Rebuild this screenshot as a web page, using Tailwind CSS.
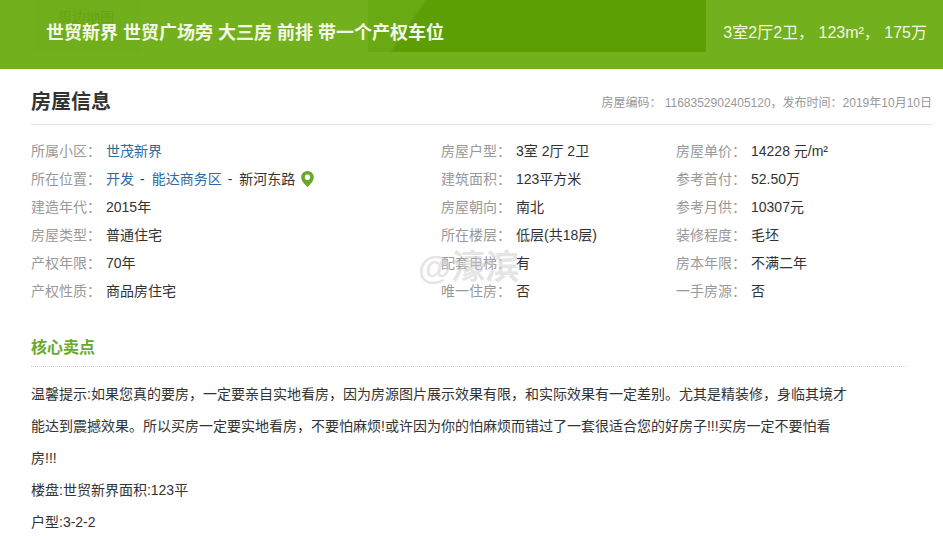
<!DOCTYPE html>
<html lang="zh-CN">
<head>
    <meta charset="UTF-8">
    <title>房屋信息</title>
    <script src="https://cdn.jsdelivr.net/npm/@tailwindcss/browser@4"></script>
</head>
<body class="bg-white h-[536px] overflow-hidden font-['Liberation_Sans','Noto_Sans_CJK_SC',sans-serif] text-sm text-[#333]">
    <!-- 顶部标题栏 -->
    <header class="relative h-[69px] bg-[#72b01d] overflow-hidden">
        <div class="absolute left-[33px] top-0 w-[109px] h-[52px] bg-[#70ae1b]"></div>
        <div class="absolute left-[368px] top-0 w-[338px] h-[52px] bg-[linear-gradient(124deg,#69a913_15%,#5d9e05_16%)]"></div>
        <div class="absolute left-[58px] top-[10px] text-sm leading-[14px] text-[#66a516]">周边地图</div>
        <div class="relative flex justify-between items-center h-[66px] pl-[46px] pr-[16px]">
            <h1 class="text-lg leading-[22px] font-bold text-[#f4f8e8]">世贸新界 世贸广场旁 大三房 前排 带一个产权车位</h1>
            <div class="text-base text-[#f0f6e0]">3室2厅2卫， 123m²， 175万</div>
        </div>
    </header>

    <main class="pl-[31px] pr-[11px]">
        <!-- 房屋信息 -->
        <div class="flex justify-between items-center h-[56px] border-b border-[#e5e5e5]">
            <h2 class="text-xl pt-[10px] font-bold text-[#333]">房屋信息</h2>
            <div class="text-xs text-[#999] pt-[13px]">房屋编码： 1168352902405120，发布时间：2019年10月10日</div>
        </div>

        <div class="grid grid-cols-[410px_235px_1fr] mt-[12px] leading-[28px]">
            <div class="flex"><span class="w-[75px] text-[#999]">所属小区：</span><a class="text-[#2d6a9f]">世茂新界</a></div>
            <div class="flex"><span class="w-[75px] text-[#999]">房屋户型：</span>3室 2厅 2卫</div>
            <div class="flex"><span class="w-[75px] text-[#999]">房屋单价：</span>14228 元/m²</div>

            <div class="flex items-center">
                <span class="w-[75px] text-[#999]">所在位置：</span>
                <a class="text-[#2d6a9f]">开发</a><span class="ml-[6px] mr-[7px]">-</span>
                <a class="text-[#2d6a9f]">能达商务区</a><span class="ml-[6px] mr-[7px]">-</span>
                <span>新河东路</span>
                <svg class="ml-[6px]" width="13" height="16" viewBox="0 0 13 16"><path fill="#6aa82b" fill-rule="evenodd" d="M6.5 0C3 0 .2 2.8.2 6.3c0 4 4.400 8 6.300 9.700 1.900-1.700 6.300-5.700 6.300-9.700C12.800 2.800 10 0 6.500 0zm0 3.600a2.700 2.700 0 1 1 0 5.400 2.700 2.700 0 0 1 0-5.400z"/></svg>
            </div>
            <div class="flex"><span class="w-[75px] text-[#999]">建筑面积：</span>123平方米</div>
            <div class="flex"><span class="w-[75px] text-[#999]">参考首付：</span>52.50万</div>

            <div class="flex"><span class="w-[75px] text-[#999]">建造年代：</span>2015年</div>
            <div class="flex"><span class="w-[75px] text-[#999]">房屋朝向：</span>南北</div>
            <div class="flex"><span class="w-[75px] text-[#999]">参考月供：</span>10307元</div>

            <div class="flex"><span class="w-[75px] text-[#999]">房屋类型：</span>普通住宅</div>
            <div class="flex"><span class="w-[75px] text-[#999]">所在楼层：</span>低层(共18层)</div>
            <div class="flex"><span class="w-[75px] text-[#999]">装修程度：</span>毛坯</div>

            <div class="flex"><span class="w-[75px] text-[#999]">产权年限：</span>70年</div>
            <div class="flex"><span class="w-[75px] text-[#999]">配套电梯：</span>有</div>
            <div class="flex"><span class="w-[75px] text-[#999]">房本年限：</span>不满二年</div>

            <div class="flex"><span class="w-[75px] text-[#999]">产权性质：</span>商品房住宅</div>
            <div class="flex"><span class="w-[75px] text-[#999]">唯一住房：</span>否</div>
            <div class="flex"><span class="w-[75px] text-[#999]">一手房源：</span>否</div>
        </div>

        <!-- 核心卖点 -->
        <h3 class="mt-[24px] w-[875px] h-[38px] leading-[38px] text-base font-bold text-[#6aa82b] border-b border-dotted border-[#ccc]">核心卖点</h3>
        <div class="mt-[11px] w-[825px] leading-[32px]">
            <p>温馨提示:如果您真的要房，一定要亲自实地看房，因为房源图片展示效果有限，和实际效果有一定差别。尤其是精装修，身临其境才能达到震撼效果。所以买房一定要实地看房，不要怕麻烦!或许因为你的怕麻烦而错过了一套很适合您的好房子!!!买房一定不要怕看房!!!</p>
            <p>楼盘:世贸新界面积:123平</p>
            <p>户型:3-2-2</p>
        </div>
    </main>

    <!-- 水印 -->
    <div class="absolute left-[418px] top-[245px] text-[34px] leading-[44px] text-[#bbb]/40 font-bold [text-shadow:0_0_2px_#ffffff66]">@濠滨</div>
</body>
</html>
